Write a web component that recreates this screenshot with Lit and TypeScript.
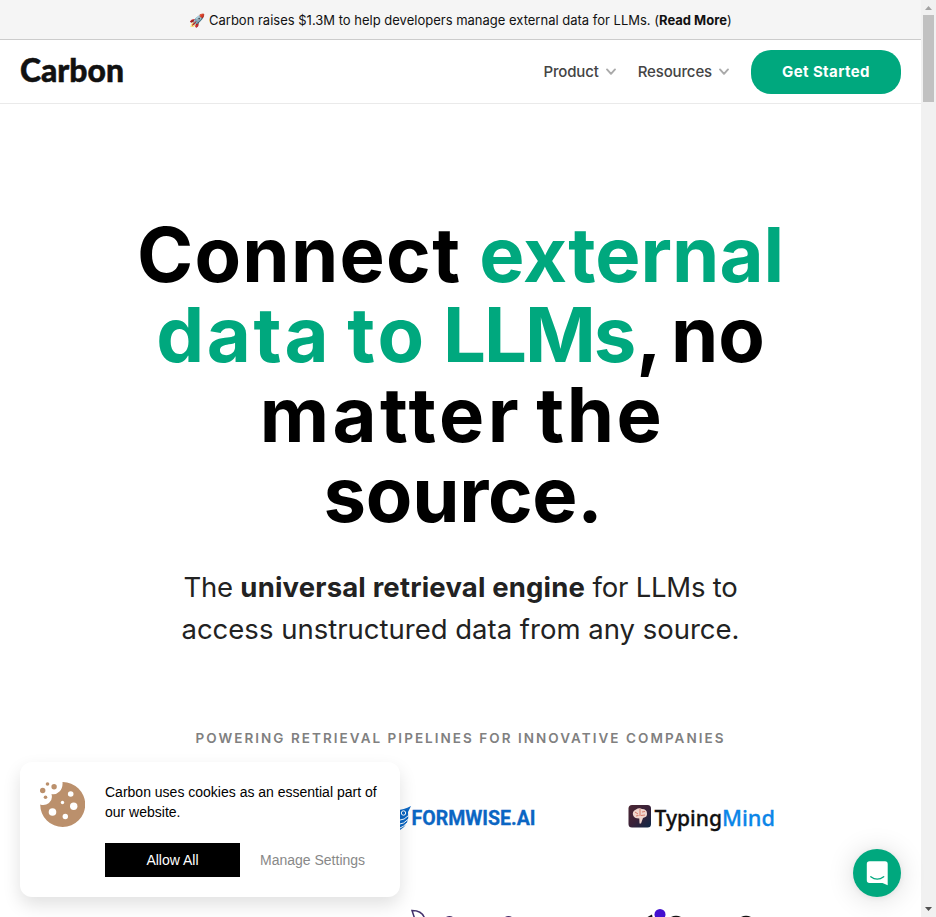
import { LitElement, html, css, svg } from "lit";
import { customElement } from "lit/decorators.js";

const chevron = html`<svg viewBox="0 0 10 8" width="10" height="8">
  <path d="M1 1.4 L5 5.8 L9 1.4" fill="none" stroke="#aaa" stroke-width="1.9" stroke-linecap="round" stroke-linejoin="round" />
</svg>`;

@customElement("site-banner")
class SiteBanner extends LitElement {
  static styles = css`
    :host { display: flex; height: 39px; align-items: center; justify-content: center; background: #f5f5f5; border-bottom: 1px solid #ccc; font: 400 13px/20px Inter, sans-serif; color: #111; }
    .msg { white-space: pre; }
    .more { font-weight: 700; }
  `;
  render() {
    return html`<span class="msg">🚀 Carbon raises $1.3M to help developers manage external data for LLMs. (<span class="more">Read More</span>)</span>`;
  }
}

@customElement("site-nav")
class SiteNav extends LitElement {
  static styles = css`
    :host { display: flex; height: 63px; align-items: center; justify-content: space-between; padding: 0 20px; border-bottom: 1px solid #eaeaea; background: #fff; font-family: Inter, sans-serif; }
    svg { display: block; overflow: visible; }
    .logo { font: 900 33px Lato, sans-serif; }
    .links { display: flex; align-items: center; color: #444; font-size: 15px; font-weight: 500; letter-spacing: -0.14px; }
    .link { display: flex; align-items: center; gap: 7px; margin-right: 22px; }
    .cta { width: 150px; height: 44px; border-radius: 20px; background: #00a87e; color: #fff; display: flex; align-items: center; justify-content: center; font-size: 15px; font-weight: 700; letter-spacing: 0.4px; }
  `;
  render() {
    return html`<svg width="110" height="44" viewBox="20 50 110 44">
        <text class="logo" x="20" y="82" textLength="104" lengthAdjust="spacingAndGlyphs" fill="#111" stroke="#111" stroke-width="0.5">Carbon</text>
      </svg>
      <div class="links">
        <div class="link"><span>Product</span>${chevron}</div>
        <div class="link"><span>Resources</span>${chevron}</div>
        <div class="cta">Get Started</div>
      </div>`;
  }
}

@customElement("hero-section")
class HeroSection extends LitElement {
  static styles = css`
    :host { display: flex; flex-direction: column; align-items: center; font-family: Inter, sans-serif; white-space: pre; }
    h1 { margin: 110px 0 0; font-size: 76px; line-height: 80px; font-weight: 700; color: #000; text-align: center; }
    .line { display: block; }
    .accent { color: #00a87e; }
    .connect { letter-spacing: 1.3px; }
    .l2 { word-spacing: -2px; }
    .data { letter-spacing: 2.7px; }
    .to { letter-spacing: 3px; }
    .llm { letter-spacing: -2px; }
    .no { word-spacing: -6.5px; }
    .l3 { word-spacing: -4px; padding-left: 3px; }
    .matter { letter-spacing: 3.4px; }
    .the { letter-spacing: 2.5px; }
    .l4 { letter-spacing: -0.3px; padding-left: 5px; }
    p { margin: 32px 0 0; font-size: 27.5px; line-height: 42px; color: #222; text-align: center; }
    .thin { letter-spacing: -0.22px; }
    b { font-weight: 700; letter-spacing: 0.17px; }
    h2 { margin: 78px 0 0; font-size: 13.5px; line-height: 20px; font-weight: 600; letter-spacing: 2.04px; color: #808080; }
  `;
  render() {
    return html`<h1><span class="line"><span class="connect">Connect</span> <span class="accent">external</span></span><span class="line l2"><span class="accent"><span class="data">data</span> <span class="to">to</span> <span class="llm">LLM</span>s</span><span class="no">, no</span></span><span class="line l3"><span class="matter">matter</span> <span class="the">the</span></span><span class="line l4">source.</span></h1>
      <p><span class="line"><span class="thin">The </span><b>universal retrieval engine</b><span class="thin"> for LLMs to</span></span><span class="line">access unstructured data from any source.</span></p>
      <h2>POWERING RETRIEVAL PIPELINES FOR INNOVATIVE COMPANIES</h2>`;
  }
}

@customElement("customer-logos")
class CustomerLogos extends LitElement {
  static styles = css`
    :host { display: grid; grid-template-columns: 150px 150px; justify-content: end; column-gap: 90px; row-gap: 69px; padding: 50px 145px 0 0; }
    svg { display: block; overflow: visible; }
    .fw { font: 700 20.5px Roboto, sans-serif; }
    .tm { font: 500 22px "Noto Sans", "Open Sans", sans-serif; }
  `;
  render() {
    return html`
      <svg width="150" height="40" viewBox="386 798 150 40">
        <path d="M390 809 Q400 812 411 806 L408 812 Q410 824 400 830 Q391 826 390 809Z" fill="#0b66c3" />
        <circle cx="403.5" cy="813" r="2.2" fill="none" stroke="#fff" stroke-width="1" />
        <path d="M398 820.5 Q405 820 408.5 815.5 M398 824.5 Q404 824 408 819.5 M399 828.5 Q404 826.5 407 823" fill="none" stroke="#fff" stroke-width="1" />
        <text class="fw" x="411.5" y="825" textLength="124" lengthAdjust="spacingAndGlyphs" fill="#0b66c3" stroke="#0b66c3" stroke-width="0.3">FORMWISE.AI</text>
      </svg>
      <svg width="150" height="40" viewBox="626 798 150 40">
        <defs>
          <linearGradient id="tile" x1="0" y1="0" x2="1" y2="1"><stop offset="0" stop-color="#4a2632" /><stop offset=".5" stop-color="#3a2138" /><stop offset="1" stop-color="#0c2746" /></linearGradient>
        </defs>
        <rect x="628.5" y="805" width="22.5" height="22.5" rx="3.5" fill="url(#tile)" />
        <path d="M633 815 Q632 811 636 809.5 Q639 807.5 642 809 Q647 809 647 813.5 Q647.5 817 643 818 L641 823.5 H639.5 L639.3 818.5 Q634 818.5 633 815Z" fill="#f0d5cd" />
        <path d="M640 809 V816 M635 812 L638 814 M642 812 L645 811.5 M641 815.5 L645 815 M636 816 L638.5 815.5" stroke="#d4705e" stroke-width="0.9" fill="none" />
        <text class="tm" x="654.5" y="825.5" textLength="67.5" lengthAdjust="spacingAndGlyphs" fill="#111" stroke="#111" stroke-width="0.3">Typing</text>
        <text class="tm" x="722" y="825.5" textLength="53" lengthAdjust="spacingAndGlyphs" fill="#0c86e8" stroke="#0c86e8" stroke-width="0.3">Mind</text>
      </svg>
      <svg width="150" height="10" viewBox="386 907 150 10">
        <path d="M414.5 918 L412 910.5 Q422 910.5 424.5 918" fill="none" stroke="#43306b" stroke-width="1.5" />
        <path d="M446 917 Q449.5 915 453 917Z M505 917 Q508.5 915 512 917Z" fill="#43306b" />
      </svg>
      <svg width="150" height="10" viewBox="626 907 150 10">
        <circle cx="660" cy="914.5" r="5.5" fill="#4310cf" />
        <path d="M647.5 917 L652 914.5 L652.5 917Z M671 917 Q676 914.6 681 917Z M741 917 Q746 914.6 751 917Z" fill="#111" />
      </svg>`;
  }
}

@customElement("cookie-card")
class CookieCard extends LitElement {
  static styles = css`
    :host { display: flex; gap: 20px; box-sizing: border-box; width: 380px; height: 135px; padding: 20px; border-radius: 12px; background: #fff; box-shadow: 0 8px 18px rgba(0, 0, 0, 0.12); font: 14px/20px "Liberation Sans", Arial, sans-serif; color: #000; }
    .cookie { flex: none; }
    .text { width: 275px; }
    .actions { display: flex; gap: 20px; margin-top: 21px; line-height: 34px; }
    .allow { width: 135px; text-align: center; background: #000; color: #fff; }
    .manage { color: #888; }
  `;
  render() {
    const holes = [[30.7, 12, 2.8], [33.7, 24.2, 3.7], [22.5, 20.5, 1.7], [12.5, 30, 3.8], [25.3, 34.5, 2.7]];
    const crumbs = [[2.7, 8.5, 2.7], [7.5, 2, 1.8], [14.1, 4.8, 2.7], [5.5, 15.2, 1.8]];
    return html`<svg class="cookie" width="45" height="45" viewBox="0 0 45 45">
        <path d="M22.5 0 A22.5 22.5 0 1 1 0.2 22.5 Q5 24 9 21 Q13 18 11.5 12 Q16 13 19.5 9.500 Q23 6 22.5 0Z" fill="#bb906c" />
        ${holes.map(([x, y, r]) => svg`<circle cx=${x} cy=${y} r=${r} fill="#fff" />`)}
        ${crumbs.map(([x, y, r]) => svg`<circle cx=${x} cy=${y} r=${r} fill="#bb906c" />`)}
      </svg>
      <div>
        <div class="text">Carbon uses cookies as an essential part of our website.</div>
        <div class="actions"><div class="allow">Allow All</div><div class="manage">Manage Settings</div></div>
      </div>`;
  }
}

@customElement("app-root")
class AppRoot extends LitElement {
  static styles = css`
    :host { display: flex; position: relative; width: 936px; height: 917px; overflow: hidden; background: #fff; }
    .page { width: 921px; height: 917px; overflow: hidden; }
    .track { width: 15px; box-sizing: border-box; background: #f1f1f1; display: flex; flex-direction: column; align-items: center; padding: 6px 0; justify-content: space-between; }
    .top { display: flex; flex-direction: column; align-items: center; gap: 5px; }
    .thumb { width: 11px; height: 87px; background: #c1c1c1; }
    svg { display: block; }
    cookie-card { position: absolute; left: 20px; bottom: 20px; }
    .chat { position: absolute; left: 853px; top: 849px; width: 48px; height: 48px; border-radius: 50%; background: #00a87e; box-shadow: 0 1px 6px rgba(0, 0, 0, 0.06), 0 2px 28px rgba(0, 0, 0, 0.14); }
  `;
  render() {
    return html`<div class="page">
        <site-banner></site-banner>
        <site-nav></site-nav>
        <hero-section></hero-section>
        <customer-logos></customer-logos>
      </div>
      <div class="track">
        <div class="top"><svg width="7" height="4" viewBox="0 0 7 4"><path d="M0 4 L3.5 0 L7 4Z" fill="#a3a3a3" /></svg><div class="thumb"></div></div>
        <svg width="7" height="4" viewBox="0 0 7 4"><path d="M0 0 L3.5 4 L7 0Z" fill="#505050" /></svg>
      </div>
      <cookie-card></cookie-card>
      <div class="chat"><svg width="48" height="48" viewBox="0 0 48 48">
        <path d="M16.5 12.3 H32 Q34.7 12.3 34.7 15 V36.2 L29.5 34 H16.5 Q13.8 34 13.8 31.3 V15 Q13.8 12.3 16.5 12.3Z" fill="#fff" />
        <path d="M17.8 27.7 Q24.2 32.6 30.7 27.7" fill="none" stroke="#00a87e" stroke-width="1.3" stroke-linecap="round" />
      </svg></div>`;
  }
}
